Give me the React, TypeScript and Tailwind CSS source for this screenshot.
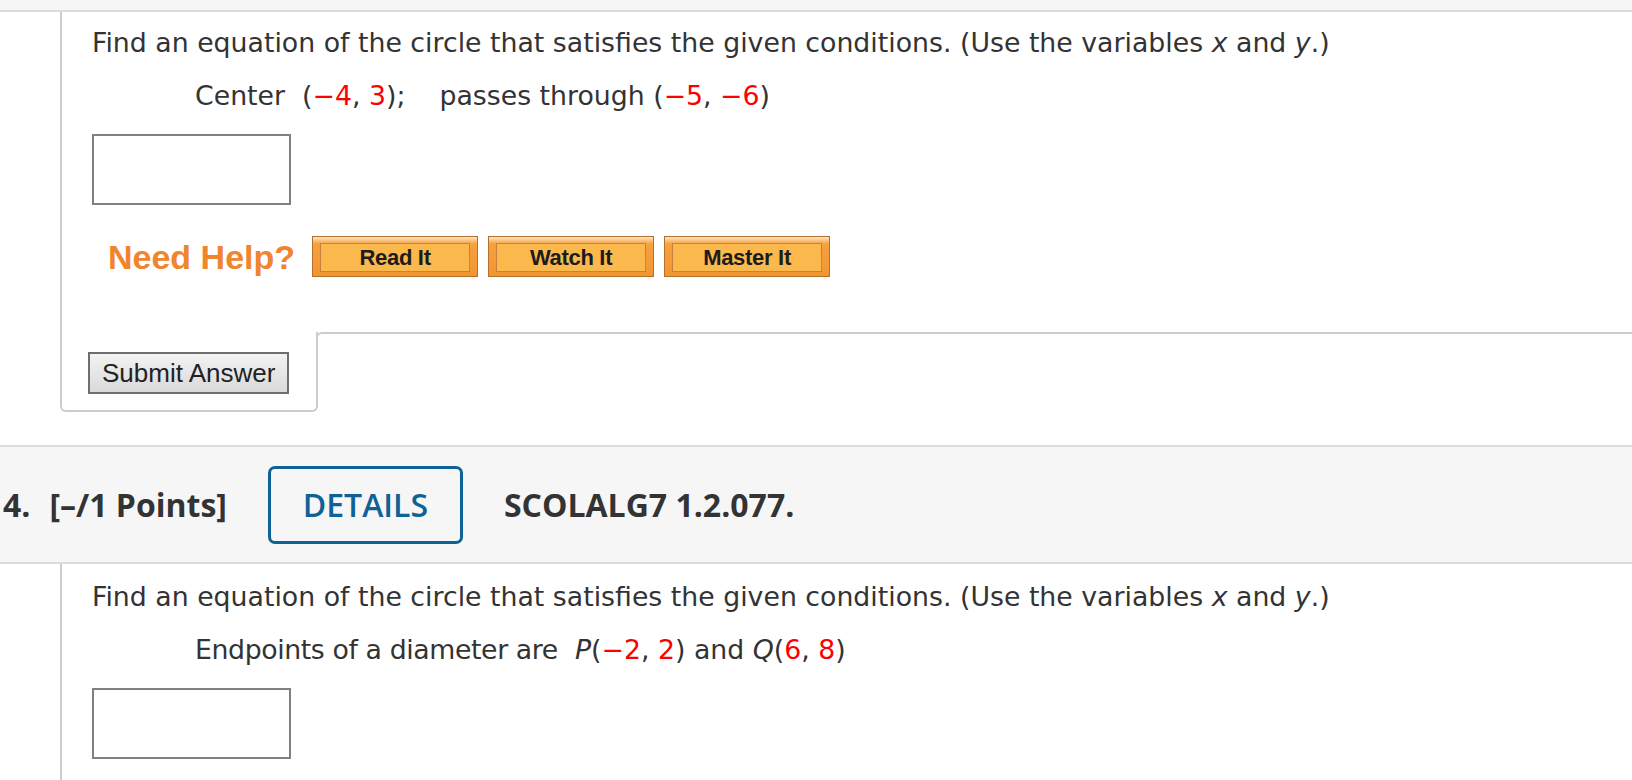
import React from 'react';

const textFont = { fontFamily: '"DejaVu Sans", Verdana, sans-serif' };

const Red = ({ children }: { children: React.ReactNode }) => (
    <span className="text-[#ff0000]">{children}</span>
);

const HelpButton = ({ label }: { label: string }) => (
    <div className="flex h-[41px] w-[166px] border border-[#b3712f] bg-[linear-gradient(180deg,#fde4c0_0%,#f6a040_18%,#f3952e_100%)] px-[7px] pt-[6px] pb-[4px]">
        <div className="flex flex-1 items-center justify-center border border-[#c4843f] bg-[#fbb84d] font-['Liberation_Sans',Arial,sans-serif] text-[22px] font-bold leading-none tracking-[-0.3px] text-[#1c1c1c]">
            {label}
        </div>
    </div>
);

const AnswerBox = () => (
    <div className="h-[71px] w-[199px] border-2 border-[#808080] bg-white" />
);

export default function App() {
    return (
        <div className="min-h-screen w-full bg-white text-[#333333]">
            {/* previous problem tail */}
            <div className="h-[12px] border-b-2 border-[#dcdcdc] bg-[#f6f6f6]" />

            <div className="ml-[60px] flex flex-col">
                <div className="h-[320px] border-l-2 border-[#cccccc] pl-[30px] pt-[15px]" style={textFont}>
                    <p className="text-[26.75px] leading-[32px]">
                        Find an equation of the circle that satisfies the given conditions. (Use the variables <i>x</i> and <i>y</i>.)
                    </p>
                    <p className="mt-[21px] ml-[103px] text-[26.75px] leading-[32px] whitespace-pre">
                        {'Center  ('}<Red>−4</Red>{', '}<Red>3</Red>{');    passes through ('}<Red>−5</Red>{', '}<Red>−6</Red>{')'}
                    </p>
                    <div className="mt-[22px]">
                        <AnswerBox />
                    </div>
                    <div className="mt-[31px] ml-[16px] flex items-center gap-[10px]">
                        <span className="mr-[7px] font-['Liberation_Sans',Arial,sans-serif] text-[34px] font-bold leading-none text-[#f0852d]">
                            Need Help?
                        </span>
                        <HelpButton label="Read It" />
                        <HelpButton label="Watch It" />
                        <HelpButton label="Master It" />
                    </div>
                </div>

                <div className="flex">
                    <div className="h-[80px] w-[258px] shrink-0 rounded-b-[6px] border-x-2 border-b-2 border-[#cccccc] pl-[26px] pt-[20px]">
                        <button className="h-[42px] w-[201px] border-2 border-[#6e6e6e] bg-[linear-gradient(180deg,#f3f3f3,#d9d9d9)] pl-[12px] text-left font-['Liberation_Sans',Arial,sans-serif] text-[26px] leading-none text-[#222222]">
                            Submit Answer
                        </button>
                    </div>
                    <div className="-ml-[2px] h-[12px] flex-1 rounded-tl-[6px] border-l-2 border-t-2 border-[#cccccc]" />
                </div>
            </div>

            {/* problem 4 header */}
            <div className="mt-[33px] flex h-[119px] items-center border-y-2 border-[#dcdcdc] bg-[#f6f6f6] font-['Open_Sans',sans-serif] text-[32px] font-bold text-[#333333]">
                <span className="ml-[3px]">4.</span>
                <span className="ml-[19px]">[–/1 Points]</span>
                <div className="ml-[41px] flex h-[78px] w-[195px] items-center justify-center rounded-[7px] border-[3px] border-[#0e6296] text-[32px] font-semibold text-[#0e6296]">
                    DETAILS
                </div>
                <span className="ml-[41px]">SCOLALG7 1.2.077.</span>
            </div>

            <div className="ml-[60px] h-[216px] border-l-2 border-[#cccccc] pl-[30px] pt-[17px]" style={textFont}>
                <p className="text-[26.75px] leading-[32px]">
                    Find an equation of the circle that satisfies the given conditions. (Use the variables <i>x</i> and <i>y</i>.)
                </p>
                <p className="mt-[21px] ml-[103px] text-[26.75px] leading-[32px] whitespace-pre">
                    <span className="tracking-[-0.4px]">{'Endpoints of a diameter are'}</span>
                    {'  '}<i>P</i>{'('}<Red>−2</Red>{', '}<Red>2</Red>{') and '}<i>Q</i>{'('}<Red>6</Red>{', '}<Red>8</Red>{')'}
                </p>
                <div className="mt-[22px]">
                    <AnswerBox />
                </div>
            </div>
        </div>
    );
}
